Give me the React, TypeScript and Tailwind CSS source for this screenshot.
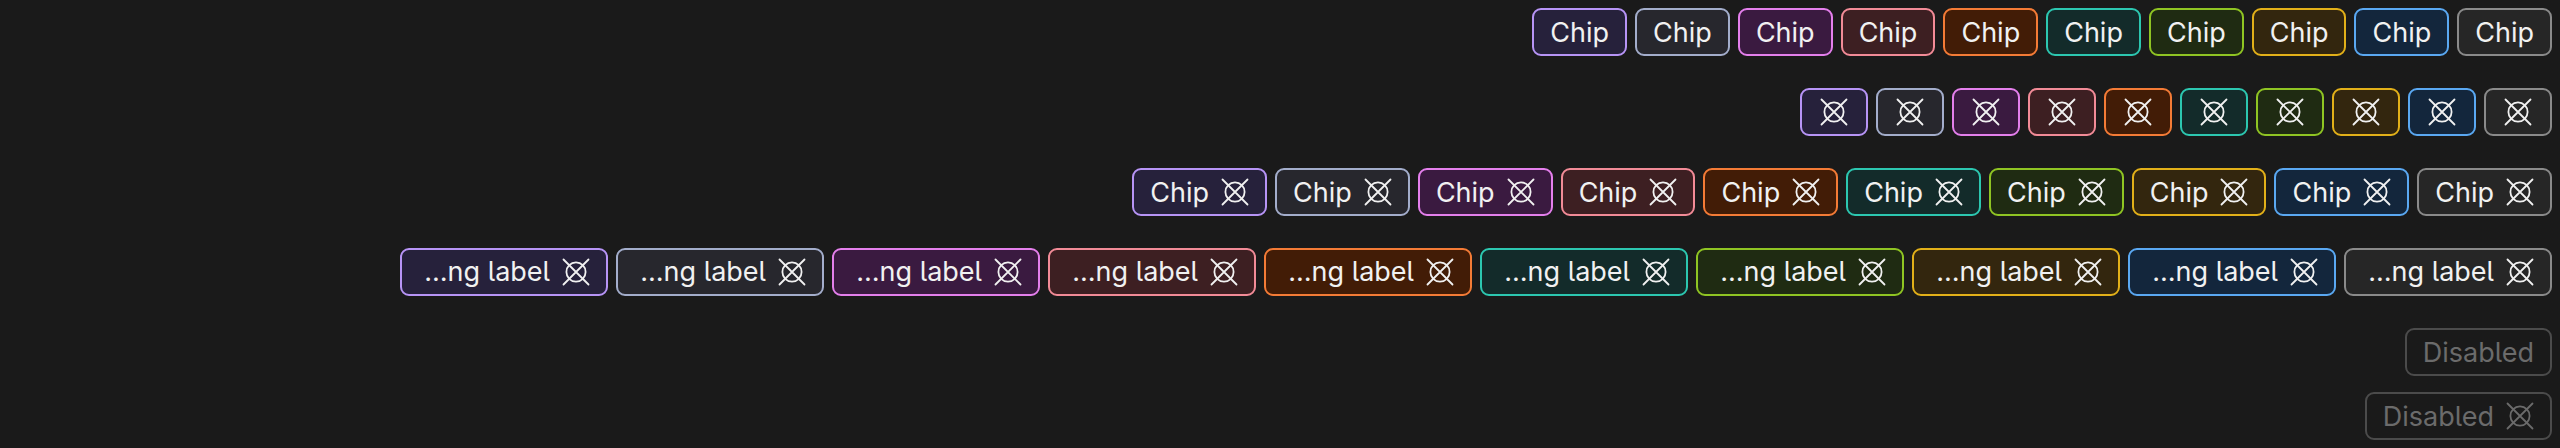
const tones = [
  "border-[#b794f6] bg-[#26213b]",
  "border-[#a3adcb] bg-[#27272d]",
  "border-[#e47fec] bg-[#3a1a40]",
  "border-[#f28b97] bg-[#3d1f22]",
  "border-[#f47b36] bg-[#421c06]",
  "border-[#2cc7b0] bg-[#132b2a]",
  "border-[#8fc423] bg-[#1f2b12]",
  "border-[#e2b019] bg-[#33260e]",
  "border-[#5aa8f2] bg-[#13263c]",
  "border-[#8a8a8a] bg-[#262626]",
];

function XCircle() {
  return (
    <svg width="28" height="28" viewBox="0 0 28 28" fill="none" stroke="currentColor" strokeWidth="1.8" strokeLinecap="round" className="shrink-0">
      <circle cx="14" cy="14" r="9.6" />
      <path d="M1.5 1.5 L26.5 26.5 M26.5 1.5 L1.5 26.5" />
    </svg>
  );
}

function Chip({ tone, children, icon, iconOnly }: { tone: string; children?: React.ReactNode; icon?: boolean; iconOnly?: boolean }) {
  return (
    <div
      className={`flex h-[48px] items-center gap-[12px] rounded-[9px] border-2 text-[#f1f1f1] ${tone} ${
        iconOnly ? "px-[18px]" : "px-4"
      }`}
    >
      {children}
      {icon && <XCircle />}
    </div>
  );
}

export default function App() {
  return (
    <div className="flex h-[448px] w-[2560px] flex-col items-end bg-[#1a1a1a] pr-2 pt-2 font-['Inter','Noto_Sans',sans-serif] text-[27px] leading-none [font-feature-settings:'cv05']">
      <div className="flex gap-2">
        {tones.map((t) => (
          <Chip key={t} tone={t}>
            <span>Chip</span>
          </Chip>
        ))}
      </div>

      <div className="mt-8 flex gap-2">
        {tones.map((t) => (
          <Chip key={t} tone={t} icon iconOnly />
        ))}
      </div>

      <div className="mt-8 flex gap-2">
        {tones.map((t) => (
          <Chip key={t} tone={t} icon>
            <span>Chip</span>
          </Chip>
        ))}
      </div>

      <div className="mt-8 flex gap-2">
        {tones.map((t) => (
          <Chip key={t} tone={t} icon>
            <span className="w-[132px] whitespace-nowrap text-right leading-[36px]">…ng label</span>
          </Chip>
        ))}
      </div>

      <div className="mt-8 flex">
        <div className="flex h-[48px] items-center rounded-[9px] border-2 border-[#4b4b4b] px-4 text-[#6b6b6b]">
          Disabled
        </div>
      </div>

      <div className="mt-4 flex">
        <div className="flex h-[48px] items-center gap-[12px] rounded-[9px] border-2 border-[#4b4b4b] px-4 text-[#6b6b6b]">
          <span>Disabled</span>
          <XCircle />
        </div>
      </div>
    </div>
  );
}
